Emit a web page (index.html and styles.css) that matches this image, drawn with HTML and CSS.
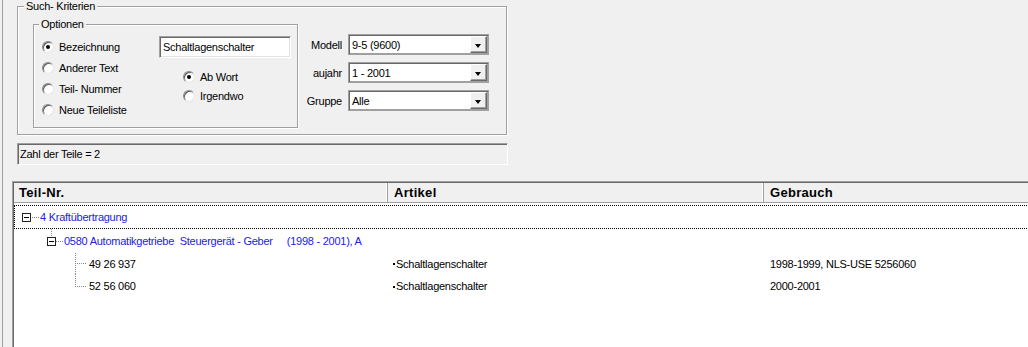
FILE: index.html
```html
<!DOCTYPE html>
<html lang="de">
<head>
    <meta charset="UTF-8">
    <title>Teilesuche</title>
    <link rel="stylesheet" href="styles.css">
</head>
<body>
    <div class="frame">
        <div class="group criteria">
            <div class="group-title">Such- Kriterien</div>
            <div class="criteria-body">
                <div class="group options">
                    <div class="group-title">Optionen</div>
                    <div class="options-body">
                        <div class="option-list">
                            <div class="radio"><span class="radio-dot checked"></span>Bezeichnung</div>
                            <div class="radio"><span class="radio-dot"></span>Anderer Text</div>
                            <div class="radio"><span class="radio-dot"></span>Teil- Nummer</div>
                            <div class="radio"><span class="radio-dot"></span>Neue Teileliste</div>
                        </div>
                        <div class="search-side">
                            <div class="textbox">Schaltlagenschalter</div>
                            <div class="match-list">
                                <div class="radio short"><span class="radio-dot checked"></span>Ab Wort</div>
                                <div class="radio short"><span class="radio-dot"></span>Irgendwo</div>
                            </div>
                        </div>
                    </div>
                </div>
                <div class="filters">
                    <span class="filter-label">Modell</span>
                    <div class="combo"><span class="combo-text">9-5 (9600)</span><span class="combo-btn"><i class="arrow"></i></span></div>
                    <span class="filter-label">aujahr</span>
                    <div class="combo"><span class="combo-text">1 - 2001</span><span class="combo-btn"><i class="arrow"></i></span></div>
                    <span class="filter-label">Gruppe</span>
                    <div class="combo"><span class="combo-text">Alle</span><span class="combo-btn"><i class="arrow"></i></span></div>
                </div>
            </div>
        </div>

        <div class="status">Zahl der Teile = 2</div>

        <div class="parts">
            <div class="parts-head">
                <div class="col c1">Teil-Nr.</div>
                <div class="col c2">Artikel</div>
                <div class="col c3">Gebrauch</div>
            </div>
            <div class="parts-body">
                <div class="row node focused">
                    <svg class="twig" width="26" height="24">
                        <rect x="8.5" y="8.5" width="8" height="8" fill="#fff" stroke="#222"/>
                        <line x1="10" y1="12.5" x2="15" y2="12.5" stroke="#000"/>
                        <line x1="18" y1="12.5" x2="26" y2="12.5" stroke="#888" stroke-dasharray="1 1"/>
                    </svg>
                    <span class="node-text">4 Kraftübertragung</span>
                </div>
                <div class="row node">
                    <svg class="twig" width="50" height="24">
                        <line x1="37.5" y1="0" x2="37.5" y2="8" stroke="#888" stroke-dasharray="1 1"/>
                        <rect x="33.5" y="8.5" width="8" height="8" fill="#fff" stroke="#222"/>
                        <line x1="35" y1="12.5" x2="40" y2="12.5" stroke="#000"/>
                        <line x1="42" y1="12.5" x2="50" y2="12.5" stroke="#888" stroke-dasharray="1 1"/>
                    </svg>
                    <span class="node-text">0580 Automatikgetriebe&nbsp; Steuergerät - Geber&nbsp;&nbsp;&nbsp;&nbsp; (1998 - 2001), A</span>
                </div>
                <div class="row leaf r3">
                    <div class="cell c1">
                        <svg class="twig" width="75" height="21">
                            <line x1="61.5" y1="0" x2="61.5" y2="21" stroke="#888" stroke-dasharray="1 1"/>
                            <line x1="63" y1="10.5" x2="73" y2="10.5" stroke="#888" stroke-dasharray="1 1"/>
                        </svg>
                        49 26 937
                    </div>
                    <div class="cell c2"><i class="bullet"></i>Schaltlagenschalter</div>
                    <div class="cell c3">1998-1999, NLS-USE 5256060</div>
                </div>
                <div class="row leaf">
                    <div class="cell c1">
                        <svg class="twig" width="75" height="24">
                            <line x1="61.5" y1="0" x2="61.5" y2="13" stroke="#888" stroke-dasharray="1 1"/>
                            <line x1="63" y1="12.5" x2="73" y2="12.5" stroke="#888" stroke-dasharray="1 1"/>
                        </svg>
                        52 56 060
                    </div>
                    <div class="cell c2"><i class="bullet"></i>Schaltlagenschalter</div>
                    <div class="cell c3">2000-2001</div>
                </div>
            </div>
        </div>
    </div>
</body>
</html>
```

FILE: styles.css
```css
body {
    margin: 0;
    background-color: #f0f0f0;
    font-family: "Liberation Sans", Arial, sans-serif;
    font-size: 11px;
    letter-spacing: -0.25px;
    color: #000;
    overflow: hidden;
}
.frame {
    height: 341px;
    margin-left: 2px;
    padding-top: 6px;
    border-left: 1px solid #a0a0a0;
    overflow: hidden;
}

/* group boxes */
.group {
    box-sizing: border-box;
    border: 1px solid #a0a0a0;
    box-shadow: 1px 1px 0 #fff, inset 1px 1px 0 #fff;
}
.group-title {
    display: table;
    margin: -7px 0 0 6px;
    padding: 0 2px;
    line-height: 12px;
    background-color: #f0f0f0;
}
.criteria {
    width: 490px;
    height: 129px;
    margin-left: 14px;
}
.criteria-body {
    display: flex;
    padding: 12px 0 0 15px;
}
.options {
    width: 265px;
    height: 104px;
}
.options .group-title {
    margin-left: 5px;
}
.options-body {
    display: flex;
    margin-top: 6px;
}
.option-list {
    width: 117px;
    padding-left: 8px;
}
.radio {
    display: flex;
    align-items: center;
    height: 21px;
}
.radio.short {
    height: 19px;
}
.radio-dot {
    box-sizing: border-box;
    display: flex;
    align-items: center;
    justify-content: center;
    width: 12px;
    height: 12px;
    margin-right: 5px;
    border-radius: 50%;
    background-color: #fff;
    border: 1px solid;
    border-color: #8a8a8a #e6e6e6 #e6e6e6 #8a8a8a;
    box-shadow: inset 1px 1px 0 #5c5c5c;
}
.radio-dot.checked::after {
    content: "";
    width: 4px;
    height: 4px;
    border-radius: 50%;
    background-color: #000;
}
.textbox {
    box-sizing: border-box;
    width: 132px;
    height: 22px;
    padding: 4px 0 0 3px;
    background-color: #fff;
    border: 1px solid;
    border-color: #a0a0a0 #fff #fff #a0a0a0;
    box-shadow: inset 1px 1px 0 #696969, inset -1px -1px 0 #e3e3e3;
}
.match-list {
    margin: 9px 0 0 24px;
}

/* combo boxes */
.filters {
    display: grid;
    grid-template-columns: 42px 141px;
    column-gap: 6px;
    row-gap: 7px;
    margin: 10px 0 0 2px;
    align-self: flex-start;
}
.filter-label {
    display: flex;
    align-items: center;
    justify-content: flex-end;
}
.combo {
    box-sizing: border-box;
    display: flex;
    align-items: center;
    height: 21px;
    padding: 0 1px 0 2px;
    background-color: #fff;
    border: 1px solid #a0a0a0;
    box-shadow: inset 1px 1px 0 #696969, inset -1px -1px 0 #a0a0a0;
}
.combo-text {
    flex: 1;
    padding-left: 1px;
}
.combo-btn {
    box-sizing: border-box;
    display: flex;
    align-items: center;
    justify-content: center;
    width: 17px;
    height: 17px;
    background-color: #f0f0f0;
    border: 1px solid;
    border-color: #fff #696969 #696969 #fff;
    box-shadow: inset -1px -1px 0 #a0a0a0;
}
.arrow {
    width: 0;
    height: 0;
    margin: 2px 1px 0 0;
    border-left: 3.5px solid transparent;
    border-right: 3.5px solid transparent;
    border-top: 4px solid #000;
}

/* status line */
.status {
    box-sizing: border-box;
    display: flex;
    align-items: center;
    width: 491px;
    height: 22px;
    margin: 8px 0 0 14px;
    padding-left: 2px;
    border: 1px solid;
    border-color: #a0a0a0 #fff #fff #a0a0a0;
    box-shadow: inset 1px 1px 0 #696969;
}

/* parts tree list */
.parts {
    box-sizing: border-box;
    width: 1030px;
    height: 180px;
    margin: 16px 0 0 9px;
    background-color: #fff;
    border: 1px solid;
    border-color: #a0a0a0 #fff #fff #a0a0a0;
    box-shadow: inset 1px 1px 0 #696969;
    padding: 1px 0 0 1px;
}
.parts-head {
    display: flex;
    height: 20px;
    background-color: #f0f0f0;
    border-bottom: 1px solid #a0a0a0;
    box-sizing: border-box;
    font-size: 13px;
    font-weight: bold;
    letter-spacing: 0.3px;
}
.col {
    display: flex;
    align-items: center;
    box-sizing: border-box;
    padding-left: 5px;
    border-right: 1px solid #a0a0a0;
    box-shadow: inset -1px 0 0 #fff;
}
.col.c1 {
    width: 374px;
}
.col.c2 {
    width: 376px;
    padding-left: 6px;
}
.col.c3 {
    flex: 1;
    border-right: none;
    box-shadow: none;
    padding-left: 6px;
}
.parts-body {
    padding-top: 2px;
}
.row {
    display: flex;
    align-items: center;
    height: 24px;
}
.row.r3 {
    height: 21px;
}
.focused {
    outline: 1px dotted #000;
    outline-offset: -1px;
}
.twig {
    display: block;
    flex: none;
}
.node-text {
    color: #2121e4;
    white-space: nowrap;
}
.cell {
    display: flex;
    align-items: center;
    height: 100%;
    box-sizing: border-box;
}
.cell.c1 {
    width: 373px;
}
.cell.c2 {
    width: 376px;
    padding-left: 6px;
}
.cell.c3 {
    padding-left: 7px;
}
.bullet {
    display: inline-block;
    width: 2px;
    height: 2px;
    margin: 1px 1px 0 0;
    background-color: #000;
}
```
